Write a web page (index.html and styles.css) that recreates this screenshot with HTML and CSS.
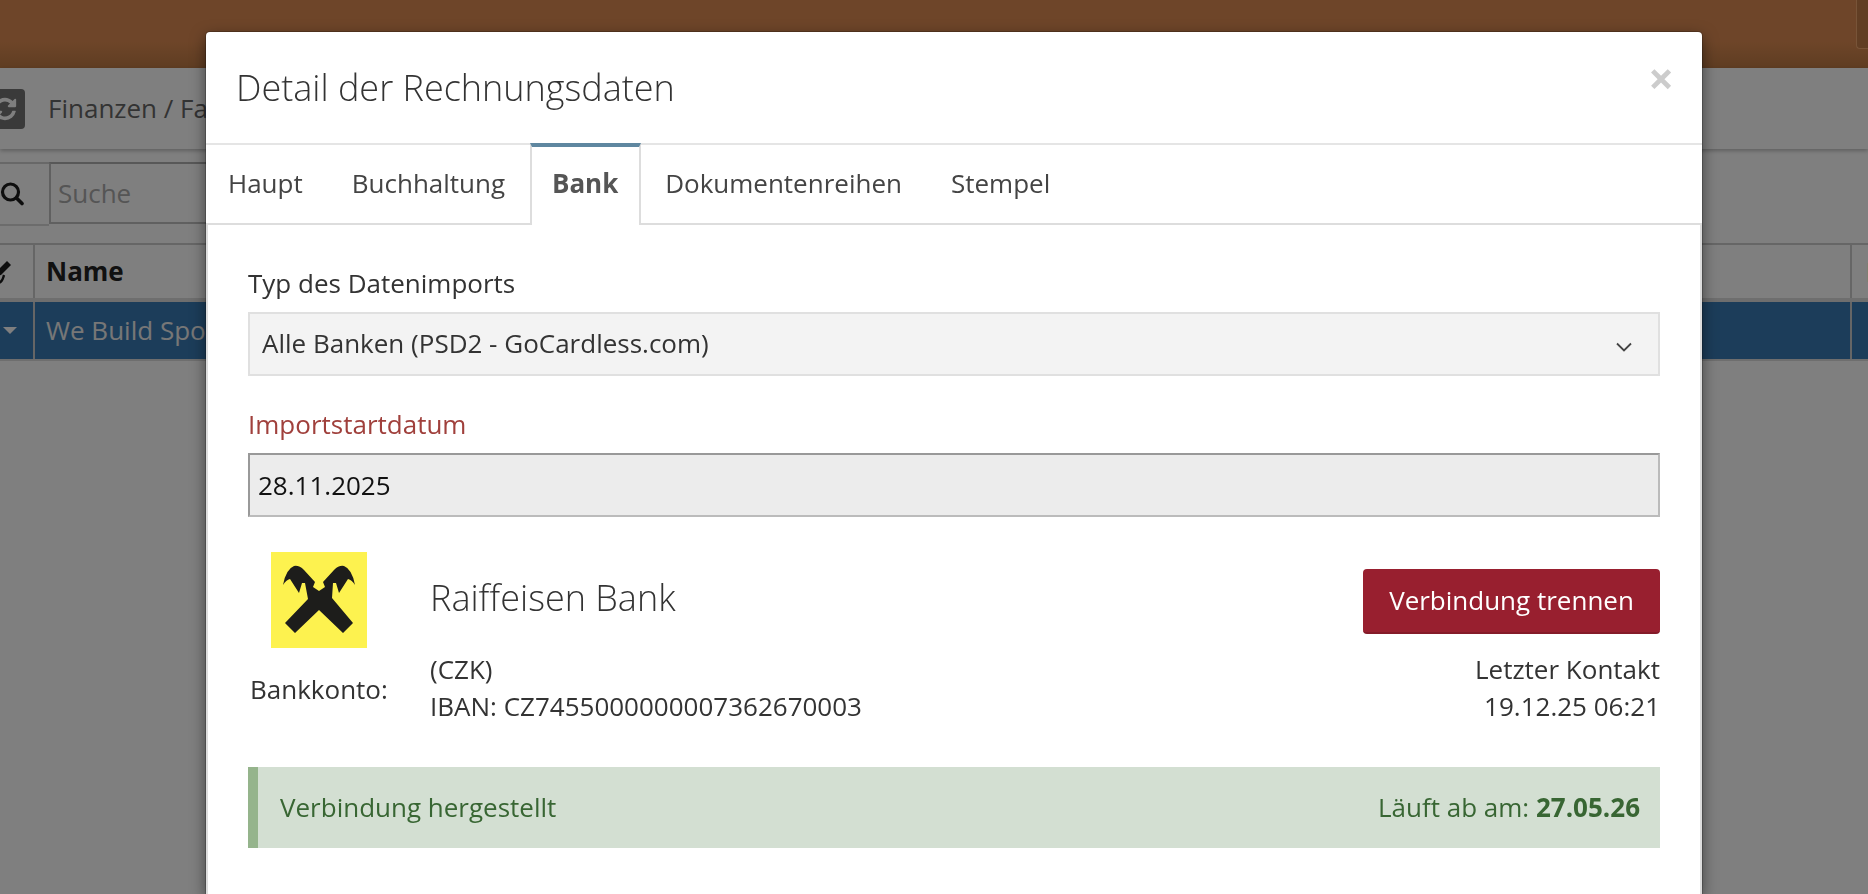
FILE: index.html
```html
<!DOCTYPE html>
<html lang="de">
<head>
<meta charset="utf-8">
<title>Detail der Rechnungsdaten</title>
<link rel="stylesheet" href="styles.css">
</head>
<body>
<div class="page">
  <header class="topbar"><span class="top-action"></span></header>
  <div class="crumbs">
    <button class="refresh" type="button">
      <svg viewBox="0 0 1792 1792" width="26" height="26"><path fill="#fff" d="M1639 1056q0 5-1 7-64 268-268 434.5t-478 166.5q-146 0-282.500-55t-243.500-157l-129 129q-19 19-45 19t-45-19-19-45v-448q0-26 19-45t45-19h448q26 0 45 19t19 45-19 45l-137 137q71 66 161 102t187 36q134 0 250-65t186-179q11-17 53-117 8-23 30-23h192q13 0 22.500 9.500t9.500 22.500zm25-800v448q0 26-19 45t-45 19h-448q-26 0-45-19t-19-45 19-45l138-138q-148-137-349-137-134 0-250 65t-186 179q-11 17-53 117-8 23-30 23h-199q-13 0-22.500-9.500t-9.500-22.500v-7q65-268 270-434.500t480-166.500q146 0 284 55.500t245 156.500l130-129q19-19 45-19t45 19 19 45z"/></svg>
    </button>
    <span class="crumb-text">Finanzen / Fa</span>
  </div>
  <div class="search">
    <span class="search-icon">
      <svg viewBox="0 0 24 24" width="24" height="24"><circle cx="10.500" cy="10" r="8" fill="none" stroke="#1c1c1c" stroke-width="3.200"/><path d="M16.500 16l5.500 5.500" stroke="#1c1c1c" stroke-width="3.600" stroke-linecap="round"/></svg>
    </span>
    <span class="search-input">Suche</span>
  </div>
  <div class="table-head">
    <span class="col-tool">
      <svg viewBox="0 0 24 24" width="24" height="24"><path d="M20 1l4 4-10 10-5 1 1-5z" fill="#1c1c1c"/><path d="M17 15c-1 3-1 6-5 8" fill="none" stroke="#1c1c1c" stroke-width="2.400"/></svg>
    </span>
    <span class="col-name">Name</span>
    <span class="col-end">N</span>
  </div>
  <div class="table-row">
    <span class="col-tool"><i class="caret"></i></span>
    <span class="col-name">We Build Spo</span>
    <span class="col-end"></span>
  </div>
</div>
<div class="backdrop"></div>
<section class="modal">
  <div class="modal-head">
    <h1 class="modal-title">Detail der Rechnungsdaten</h1>
    <span class="modal-close">×</span>
  </div>
  <nav class="tabs">
    <span class="tab">Haupt</span>
    <span class="tab">Buchhaltung</span>
    <span class="tab active">Bank</span>
    <span class="tab">Dokumentenreihen</span>
    <span class="tab">Stempel</span>
  </nav>
  <div class="modal-body">
    <label class="field-label">Typ des Datenimports</label>
    <div class="select">
      <span>Alle Banken (PSD2 - GoCardless.com)</span>
      <svg class="chevron" viewBox="0 0 16 10" width="16" height="10"><path d="M1 1.500l7 7 7-7" fill="none" stroke="#444" stroke-width="1.800"/></svg>
    </div>
    <label class="field-label required">Importstartdatum</label>
    <div class="date-input">28.11.2025</div>
    <div class="bank">
      <div class="bank-left">
        <div class="bank-logo">
          <svg viewBox="0 0 96 96" width="96" height="96"><rect width="96" height="96" fill="#fdf24f"/><path fill="#1d1d1b" d="M52 30L63 18Q68 13 73 14Q81 17 84 33Q81 28 77 27L68 41L65 31L62 31L61 46L82 71L72 81L48 58L24 81L14 71L37 47L34 31L31 31L28 41L19 27Q15 28 12 33Q15 17 23 14Q28 13 33 18L44 30L42 35L48 39L54 35Z"/></svg>
        </div>
        <div class="bank-account-label">Bankkonto:</div>
      </div>
      <div class="bank-main">
        <div class="bank-name">Raiffeisen Bank</div>
        <div class="bank-account">(CZK)<br>IBAN: CZ7455000000007362670003</div>
      </div>
      <div class="bank-right">
        <button class="disconnect" type="button">Verbindung trennen</button>
        <div class="last-contact">Letzter Kontakt<br>19.12.25 06:21</div>
      </div>
    </div>
    <div class="status">
      <span>Verbindung hergestellt</span>
      <span>Läuft ab am: <b>27.05.26</b></span>
    </div>
  </div>
</section>
</body>
</html>
```
FILE: styles.css
```css
* { box-sizing: border-box; }
html, body { margin: 0; height: 100%; }
body {
  background: #fff;
  font-family: "Open Sans", sans-serif;
  font-size: 26px;
  color: #333;
  overflow: hidden;
}
.page { height: 894px; overflow: hidden; }
.topbar {
  height: 68px;
  display: flex;
  justify-content: flex-end;
  background: linear-gradient(#dc8b52 0, #dc8b52 62%, #be7a44 100%);
}
.top-action {
  width: 12px;
  height: 49px;
  background: #c27c48;
  border-left: 1px solid #f0a870;
  border-bottom: 1px solid #f0a870;
  border-bottom-left-radius: 4px;
}
.crumbs {
  height: 81px;
  display: flex;
  align-items: center;
  box-shadow: 0 2px 4px rgba(0,0,0,.25);
  color: #666;
}
.refresh {
  width: 25px;
  height: 40px;
  margin: 0 23px 0 0;
  padding: 0;
  border: 0;
  border-radius: 0 4px 4px 0;
  background: #757575;
  display: flex;
  align-items: center;
  justify-content: flex-end;
  overflow: hidden;
}
.refresh svg { flex: none; margin-right: 7px; }
.crumb-text { white-space: nowrap; padding-bottom: 2px; }
.search {
  margin-top: 13px;
  width: 900px;
  height: 64px;
  display: flex;
}
.search-icon {
  width: 49px;
  flex: none;
  display: flex;
  align-items: center;
  border-bottom: 2px solid #d8d8d8;
  border-top: 2px solid #d0d0d0;
}
.search-input {
  flex: 1;
  display: flex;
  align-items: center;
  height: 62px;
  padding-left: 7px;
  border: 2px solid #c0c0c0;
  border-top-color: #b0b0b0;
  color: #aaa;
}
.table-head, .table-row { display: flex; }
.table-head {
  margin-top: 17px;
  height: 59px;
  align-items: stretch;
  border-top: 2px solid #ccc;
  border-bottom: 4px solid #ddd;
  font-weight: 700;
  color: #222;
}
.table-row {
  height: 59px;
  background: #387ab4;
  background-clip: content-box;
  border-bottom: 2px solid #ddd;
  color: #eee;
}
.col-tool {
  width: 35px;
  flex: none;
  display: flex;
  align-items: center;
  border-right: 2px solid #ccc;
  overflow: hidden;
}
.table-head .col-tool svg { flex: none; margin-left: -13px; }
.col-name {
  flex: 1;
  display: flex;
  align-items: center;
  padding: 0 0 2px 11px;
  border-right: 2px solid #ccc;
}
.col-end {
  width: 16px;
  flex: none;
  display: flex;
  align-items: center;
  padding-left: 14px;
  overflow: hidden;
}
.caret {
  display: block;
  margin-left: 3px;
  border: 7px solid transparent;
  border-top-color: #fff;
  border-bottom-width: 0;
}
.backdrop {
  position: fixed;
  inset: 0;
  background: rgba(0,0,0,.5);
}
.modal {
  position: absolute;
  left: 206px;
  top: 32px;
  bottom: 0;
  width: 1496px;
  display: flex;
  flex-direction: column;
  background: #fff;
  border-radius: 4px 4px 0 0;
  box-shadow: 0 0 0 1px rgba(0,0,0,.2), 0 5px 15px rgba(0,0,0,.5);
}
.modal-head {
  height: 113px;
  flex: none;
  padding: 0 30px;
  display: flex;
  justify-content: space-between;
  align-items: flex-start;
  border-bottom: 2px solid #e5e5e5;
}
.modal-title {
  margin: 33px 0 0;
  font-size: 36px;
  line-height: 46px;
  font-weight: 300;
  color: #333;
}
.modal-close {
  margin: 23px -2px 0 0;
  font-size: 45px;
  line-height: 46px;
  font-weight: 700;
  color: #ccc;
}
.tabs {
  height: 82px;
  flex: none;
  margin-top: -2px;
  display: flex;
  border-bottom: 2px solid #ddd;
}
.tab {
  height: 82px;
  padding: 0 24.500px 6px;
  display: flex;
  align-items: center;
  color: #444;
  border-top: 4px solid transparent;
}
.tab:first-child { padding-left: 22px; }
.tab.active {
  width: 111px;
  justify-content: center;
  padding: 0 0 6px;
  font-weight: 700;
  color: #555;
  background: #fff;
  border-top: 4px solid #5f87a0;
  border-left: 2px solid #ddd;
  border-right: 2px solid #ddd;
}
.modal-body {
  flex: 1;
  padding: 41px 40px 0;
  border-left: 2px solid #ddd;
  border-right: 2px solid #ddd;
}
.field-label {
  display: block;
  line-height: 34px;
  color: #333;
}
.required { color: #a0403c; margin-top: 31px; }
.select {
  margin-top: 12px;
  height: 64px;
  display: flex;
  align-items: center;
  justify-content: space-between;
  padding: 0 26px 3px 12px;
  background: #f3f3f3;
  border: 2px solid #e0e0e0;
}
.chevron { margin-top: 8px; }
.date-input {
  margin-top: 12px;
  height: 64px;
  display: flex;
  align-items: center;
  padding-left: 8px;
  background: #ececec;
  border: 2px solid #bbb;
  border-top-color: #999;
  border-left-color: #999;
  color: #111;
}
.bank {
  margin-top: 35px;
  display: flex;
}
.bank-left { width: 182px; flex: none; }
.bank-logo {
  width: 96px;
  height: 96px;
  margin-left: 23px;
}
.bank-logo svg { display: block; }
.bank-account-label { margin: 22px 0 0 2px; line-height: 38px; }
.bank-main { flex: 1; }
.bank-name {
  margin-top: 23px;
  font-size: 36px;
  line-height: 46px;
  font-weight: 300;
}
.bank-account { margin-top: 30px; line-height: 37px; }
.bank-right {
  display: flex;
  flex-direction: column;
  align-items: flex-end;
  text-align: right;
}
.disconnect {
  margin-top: 17px;
  width: 297px;
  height: 65px;
  padding: 0 0 2px;
  border: 0;
  border-bottom: 2px solid #841b29;
  border-radius: 4px;
  background: #981f2f;
  color: #fff;
  font: 26px "Open Sans", sans-serif;
}
.last-contact { margin-top: 17px; line-height: 37px; }
.status {
  margin-top: 42px;
  height: 81px;
  padding: 0 20px 2px 22px;
  display: flex;
  align-items: center;
  justify-content: space-between;
  background: #d3dfd2;
  border-left: 10px solid #95b48c;
  color: #386633;
}
```
